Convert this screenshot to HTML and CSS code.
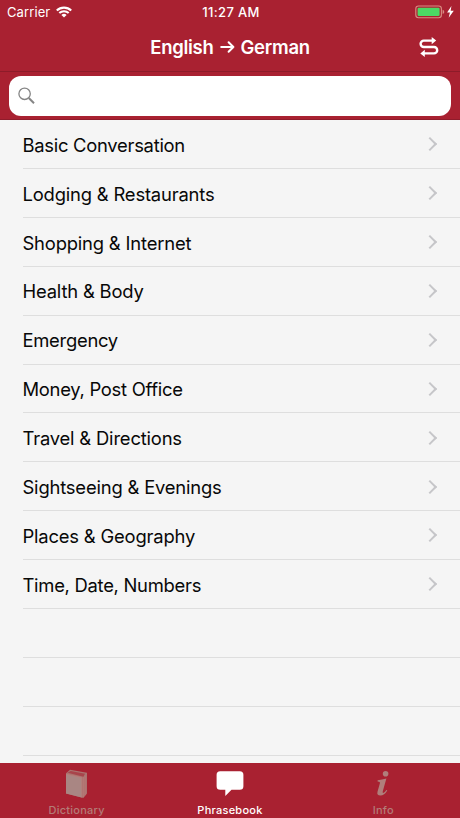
FILE: index.html
```
<!DOCTYPE html>
<html lang="en">
<head>
<meta charset="utf-8">
<title>Phrasebook</title>
<link rel="stylesheet" href="styles.css">
</head>
<body>
<div class="app">
  <header class="top">
    <div class="status">
      <div class="carrier"><span>Carrier</span>
        <svg width="16" height="12" viewBox="0 0 16 12" fill="none" stroke="#fff" stroke-width="2.1"><path d="M.8 4.5a10.4 10.4 0 0 1 14.4 0M3.3 7.1a6.8 6.8 0 0 1 9.4 0"/><path d="M5.4 8.9a3.8 3.8 0 0 1 5.2 0L8 11.6z" fill="#fff" stroke="none"/></svg>
      </div>
      <time class="clock">11:27 AM</time>
      <div class="power">
        <svg width="40" height="14" viewBox="0 0 40 14"><rect x=".8" y="1" width="25.6" height="11.8" rx="2.7" fill="none" stroke="#d98d83" stroke-width="1.1"/><rect x="2.6" y="2.8" width="22" height="8.2" rx="1.2" fill="#4cd964"/><path d="M27.6 4.8q1.7.6 1.7 2.1t-1.7 2.1z" fill="#d98d83"/><path d="M36.4 1 32.1 7.5h2.8l-1.2 5.3 5.1-7h-3.1z" fill="#fff"/></svg>
      </div>
    </div>
    <div class="nav">
      <h1 class="title"><span>English</span><svg width="15" height="14" viewBox="0 0 15 14" fill="none" stroke="#fff" stroke-width="2" stroke-linecap="round" stroke-linejoin="round"><path d="M1.2 7h12.2M8.6 2.2 13.4 7l-4.8 4.8"/></svg><span>German</span></h1>
      <button class="swap" aria-label="Swap languages"><svg width="20" height="20" viewBox="0 0 20 20" fill="none" stroke="#fff" stroke-width="2.4"><path d="M14 3.6H4.8a3.2 3.2 0 0 0 0 6.4h10.2a3.2 3.2 0 0 1 0 6.4H5"/><path d="m12.7 0 4.5 3.6-4.5 3.6zM5.8 12.8 1.3 16.4 5.8 20z" fill="#fff" stroke="none"/></svg></button>
    </div>
    <div class="search-bar">
      <label class="search"><svg width="18" height="18" viewBox="0 0 18 18" fill="none" stroke="#858585"><circle cx="6.6" cy="6.8" r="5.7" stroke-width="1.3"/><path d="m10.8 11 5.2 5.2" stroke-width="2"/></svg><input aria-label="Search"></label>
    </div>
  </header>
  <main class="list">
    <a class="row"><span>Basic Conversation</span><i class="chevron"></i></a>
    <a class="row wide"><span>Lodging &amp; Restaurants</span><i class="chevron"></i></a>
    <a class="row wide"><span>Shopping &amp; Internet</span><i class="chevron"></i></a>
    <a class="row wide"><span>Health &amp; Body</span><i class="chevron"></i></a>
    <a class="row"><span>Emergency</span><i class="chevron"></i></a>
    <a class="row"><span>Money, Post Office</span><i class="chevron"></i></a>
    <a class="row wide"><span>Travel &amp; Directions</span><i class="chevron"></i></a>
    <a class="row wide"><span>Sightseeing &amp; Evenings</span><i class="chevron"></i></a>
    <a class="row wide"><span>Places &amp; Geography</span><i class="chevron"></i></a>
    <a class="row"><span>Time, Date, Numbers</span><i class="chevron"></i></a>
    <div class="row"></div>
    <div class="row"></div>
    <div class="row"></div>
  </main>
  <nav class="tabs">
    <a class="tab"><svg width="24" height="30" viewBox="0 0 24 30"><path d="m1 4.2 4-3.4 17 3v20.7L18.4 29 1 24.5z" fill="#aa726f"/><path d="m2.7 3.8 3-1.8L20 4.7l-1.6 3z" fill="#a8444b"/><path d="m1 5 15.8 3.4v20L1 24.5z" fill="#a98683"/><path d="M1 5.2 16.8 8.4v20M18.3 8v20M20.1 6.5v19.7" fill="none" stroke="#bd7c79" stroke-width=".7"/></svg><span>Dictionary</span></a>
    <a class="tab active"><svg width="28" height="30" viewBox="0 0 28 30"><path d="M4.2 2.2h19.6q3.6 0 3.6 3.5v11.6q0 3.5-3.6 3.5h-8.3L9.3 27v-6.2H4.2q-3.6 0-3.6-3.5V5.7q0-3.5 3.6-3.5z" fill="#fff"/></svg><span>Phrasebook</span></a>
    <a class="tab"><svg width="16" height="30" viewBox="0 0 16 30" fill="#b07e7b"><circle cx="10.6" cy="4.8" r="2.8"/><path d="M2.6 11.2Q7 10.8 11.4 9.6L7.8 22.2q-.4 1.8.4 1.8 1.2 0 3.2-3l.9.6q-3 5-6.9 5-3.9 0-2.9-3.8l2.4-8.6q.4-1.5-2.3-1.6z"/></svg><span>Info</span></a>
  </nav>
</div>
</body>
</html>
```

FILE: styles.css
```
* { box-sizing: border-box; }
body { margin: 0; font-family: Inter, "Liberation Sans", sans-serif; background: #f5f5f5; }
.app { width: 460px; height: 818px; display: flex; flex-direction: column; overflow: hidden; }
.top { height: 120px; flex: none; background: #a92131; color: #fff; border-bottom: 1px solid #8f1c2b; }
.status { height: 23px; display: grid; grid-template-columns: 1fr auto 1fr; align-items: center; padding: 1px 5px 0 7px; font-size: 13px; }
.carrier { display: flex; align-items: center; gap: 6px; letter-spacing: .1px; }
.clock { font-weight: 500; letter-spacing: .35px; }
.power { display: flex; justify-content: flex-end; }
.nav { height: 49px; display: grid; grid-template-columns: 60px 1fr 60px; align-items: center; border-bottom: 1px solid #8d1b29; }
.title { grid-column: 2; margin: 0; display: flex; align-items: center; justify-content: center; gap: 6px; font-size: 18.5px; font-weight: 600; letter-spacing: -.28px; }
.swap { display: flex; width: 20px; padding: 0; margin-left: 18.5px; border: 0; background: none; }
.search-bar { padding: 4px 9px; }
.search { height: 40px; display: flex; align-items: center; gap: 8px; padding: 0 9px; border-radius: 12px; background: #fff; }
.search input { flex: 1; border: 0; outline: 0; background: transparent; font: inherit; }
.list { flex: 1; min-height: 0; overflow: hidden; }
.row { height: 48.92px; margin-left: 23px; padding: 1.5px 22px 0 0; display: flex; align-items: center; justify-content: space-between; border-bottom: 1px solid #dedede; color: #080808; font-size: 18.4px; letter-spacing: -.27px; }
.row span { margin-left: -.5px; }
.row.wide { letter-spacing: -.18px; }
.chevron { width: 10px; height: 10px; margin-top: -1px; border: solid #c6c6c9; border-width: 2px 2px 0 0; transform: translateX(-3px) rotate(45deg); }
.tabs { height: 55px; flex: none; display: grid; grid-template-columns: repeat(3, 1fr); background: #a92131; }
.tab { display: flex; flex-direction: column; align-items: center; padding-top: 6px; color: #b47b77; font-size: 11px; font-weight: 500; line-height: 14px; letter-spacing: .25px; }
.tab span { margin-top: 4px; }
.tab.active { color: #fff; }
```
